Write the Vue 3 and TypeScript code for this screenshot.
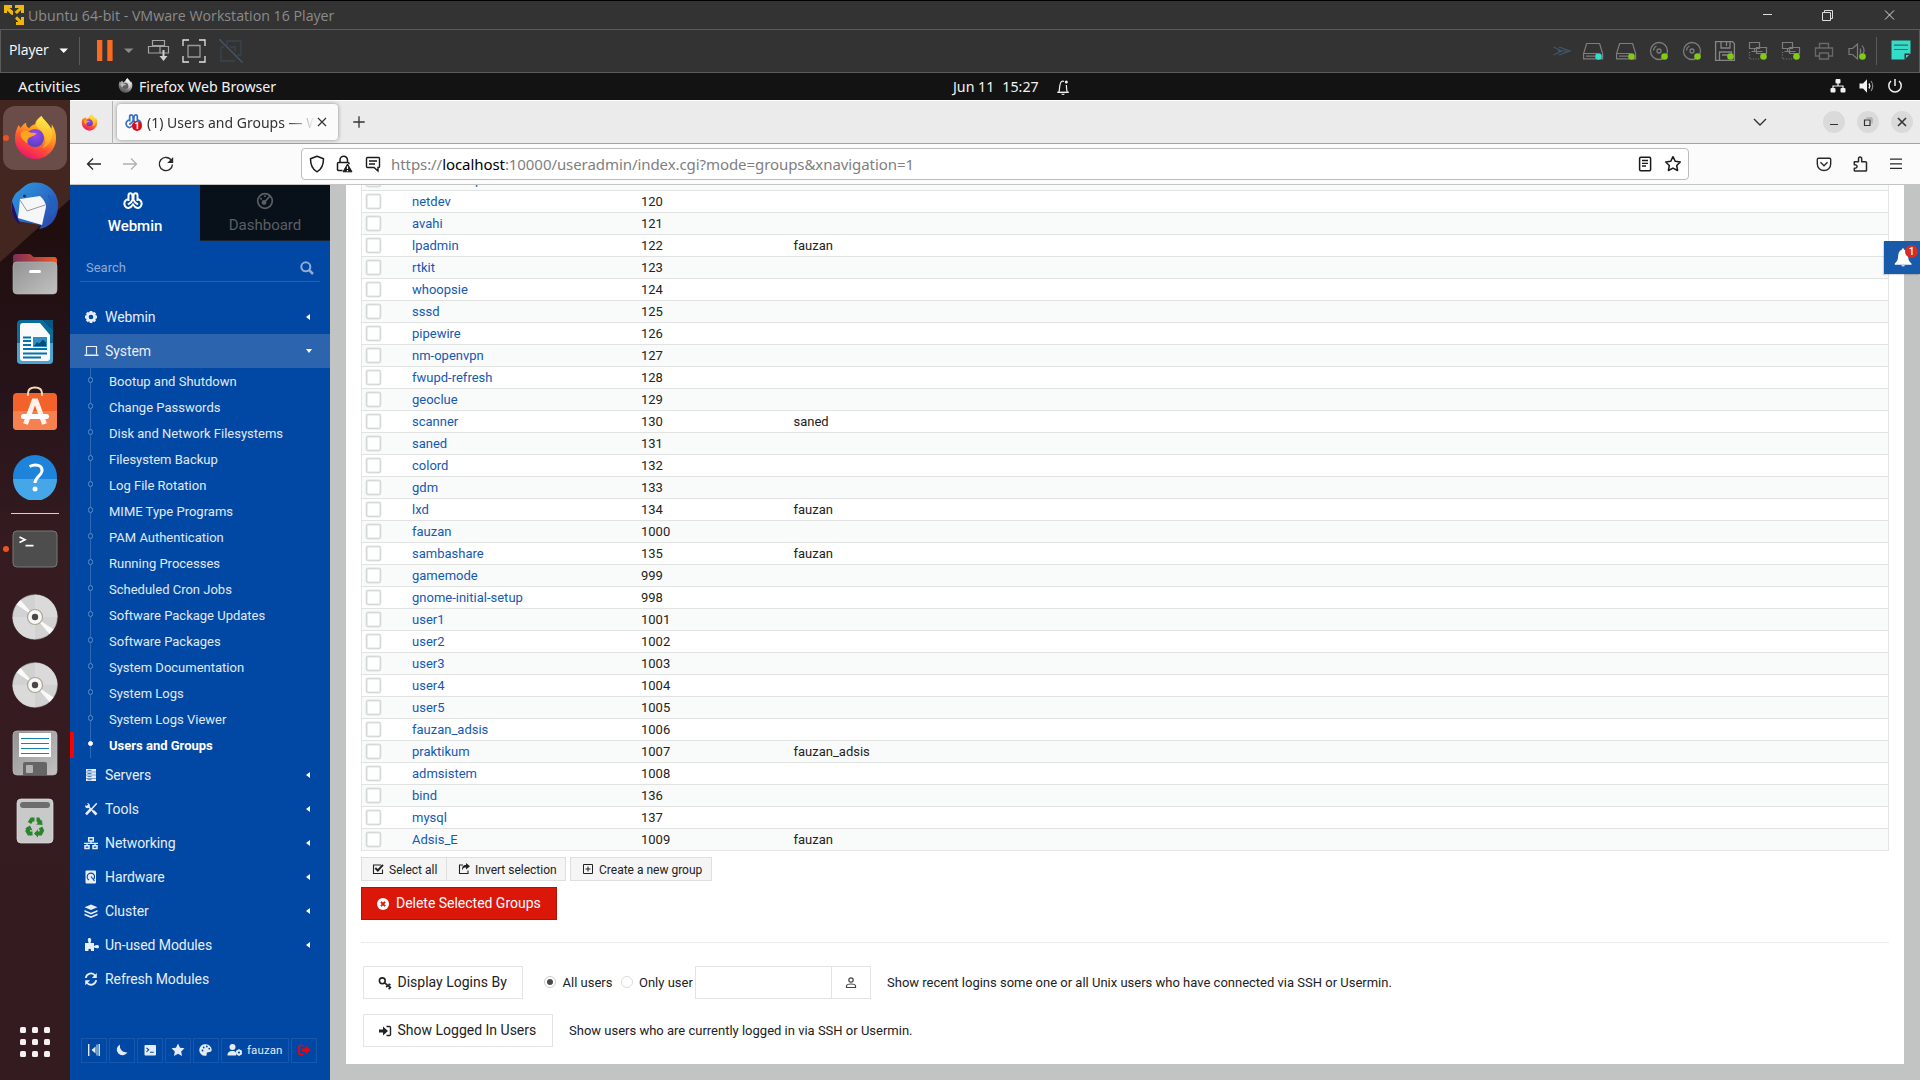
<script setup lang="ts">
interface Group { name: string; gid: number; members?: string }
interface NavItem { label: string; icon: string; arrow: boolean }

const groups: Group[] = [
  { name: 'avahi-autoipd', gid: 119 },
  { name: 'netdev', gid: 120 },
  { name: 'avahi', gid: 121 },
  { name: 'lpadmin', gid: 122, members: 'fauzan' },
  { name: 'rtkit', gid: 123 },
  { name: 'whoopsie', gid: 124 },
  { name: 'sssd', gid: 125 },
  { name: 'pipewire', gid: 126 },
  { name: 'nm-openvpn', gid: 127 },
  { name: 'fwupd-refresh', gid: 128 },
  { name: 'geoclue', gid: 129 },
  { name: 'scanner', gid: 130, members: 'saned' },
  { name: 'saned', gid: 131 },
  { name: 'colord', gid: 132 },
  { name: 'gdm', gid: 133 },
  { name: 'lxd', gid: 134, members: 'fauzan' },
  { name: 'fauzan', gid: 1000 },
  { name: 'sambashare', gid: 135, members: 'fauzan' },
  { name: 'gamemode', gid: 999 },
  { name: 'gnome-initial-setup', gid: 998 },
  { name: 'user1', gid: 1001 },
  { name: 'user2', gid: 1002 },
  { name: 'user3', gid: 1003 },
  { name: 'user4', gid: 1004 },
  { name: 'user5', gid: 1005 },
  { name: 'fauzan_adsis', gid: 1006 },
  { name: 'praktikum', gid: 1007, members: 'fauzan_adsis' },
  { name: 'admsistem', gid: 1008 },
  { name: 'bind', gid: 136 },
  { name: 'mysql', gid: 137 },
  { name: 'Adsis_E', gid: 1009, members: 'fauzan' },
]

const systemModules = [
  'Bootup and Shutdown', 'Change Passwords', 'Disk and Network Filesystems', 'Filesystem Backup',
  'Log File Rotation', 'MIME Type Programs', 'PAM Authentication', 'Running Processes',
  'Scheduled Cron Jobs', 'Software Package Updates', 'Software Packages', 'System Documentation',
  'System Logs', 'System Logs Viewer', 'Users and Groups',
]

const navItems: NavItem[] = [
  { label: 'Servers', icon: 'servers', arrow: true },
  { label: 'Tools', icon: 'tools', arrow: true },
  { label: 'Networking', icon: 'network', arrow: true },
  { label: 'Hardware', icon: 'hdd', arrow: true },
  { label: 'Cluster', icon: 'layers', arrow: true },
  { label: 'Un-used Modules', icon: 'puzzle', arrow: true },
  { label: 'Refresh Modules', icon: 'refresh', arrow: false },
]

const devices = ['chevrons', 'disk', 'disk2', 'cd', 'cd', 'floppy', 'net', 'net', 'printer', 'sound']

/* 24 x 24 glyphs, centred on 12,12 */
const dot = (fill: string) => `<circle cx="17.5" cy="17.5" r="3.3" fill="${fill}"/>`
const drive = '<path d="M5.6 4.5h13l3 10v5.300H2.600v-5.300zM2.600 14.500H16M5 17.200h9" fill="none" stroke="#7d7d7d" stroke-width="1.200"/>'
const icons: Record<string, string> = {
  chevrons: '<path d="M4.500 8l8 4-8 4M10 8l11 4-11 4M9 12h9" fill="none" stroke="#41596b" stroke-width="1.200"/>',
  disk: drive + dot('#35dcc8'),
  disk2: drive + dot('#84c81a'),
  cd: '<g fill="none" stroke="#7d7d7d" stroke-width="1.300"><circle cx="12" cy="12" r="8.500"/><circle cx="12" cy="12" r="2"/><path d="M6.500 11.500a5.500 5.500 0 0 1 3-4.500"/></g>' + dot('#84c81a'),
  floppy: '<path d="M2.600 2.600h16.800l2 2v16.800H2.600zM8 2.600v6.400h9V2.600M13.500 3v4M6.500 21.400v-8.400h12v5M9 16h7" fill="none" stroke="#858585" stroke-width="1.300"/>' + dot('#84c81a'),
  net: '<g fill="none" stroke="#7d7d7d" stroke-width="1.200"><path d="M3.500 3.500h10v6h-10zM10.500 8.500h10v6h-10zM8.500 9.500v3h-3M8.500 12.500h8"/><path d="M3.500 13v7h11" stroke-dasharray="1 1.600"/></g>' + dot('#84c81a'),
  printer: '<path d="M7.500 9V4.500h9V9M7.500 17h-4V9h17v8h-4M7.500 14h9v6h-9z" fill="none" stroke="#6a6a6a" stroke-width="1.300"/>',
  sound: '<path d="M4 9.500h3.500l5-4.500v15l-5-4.500H4zM15 9.500q1.500 2 0 5M17 6.500q3.500 4.500 1 8" fill="none" stroke="#7d7d7d" stroke-width="1.200"/>' + dot('#84c81a'),
  webmin: '<g fill="none" stroke="currentColor" stroke-width="2"><path d="M7.500 12V6.500c0-3 3.500-3 4 0V10M12.500 10V6.500c.5-3 4-3 4 0V12"/><path d="M7.500 10c-4 1-5 4-3.500 7 2 3 5 3 8-1.500 3 4.500 6 4.500 8 1.500 1.500-3 .5-6-3.500-7"/><path d="M7 15.500l3-2.200 2-3.300 2 3.300 3 2.200"/></g>',
  gauge: '<circle cx="12" cy="12" r="7.300" fill="none" stroke="currentColor" stroke-width="1.700"/><circle cx="11" cy="13.500" r="2.400" fill="currentColor"/><path d="M12 12.500L17.500 6.500M7.500 10.500l1-1.500M12 6.500v1.500" stroke="currentColor" stroke-width="1.800"/>',
  search: '<circle cx="10.800" cy="10.800" r="4.500" fill="none" stroke="currentColor" stroke-width="2.100"/><path d="M14 14l4 4" stroke="currentColor" stroke-width="2.500"/>',
  gear: '<circle cx="12" cy="12" r="3.700" fill="none" stroke="currentColor" stroke-width="2.800"/><path d="M12 6v2M12 16v2M6 12h2M16 12h2M7.800 7.800l1.300 1.300M14.900 14.900l1.300 1.300M7.800 16.200l1.300-1.300M14.900 9.100l1.300-1.300" stroke="currentColor" stroke-width="2.800"/>',
  laptop: '<path d="M7.500 15.500V7.500h10v8" fill="none" stroke="currentColor" stroke-width="1.200"/><path d="M5.500 15.500h14v1.500h-14z" fill="currentColor"/>',
  servers: '<g fill="currentColor"><path d="M7 6h10v2.700H7zM7 9.200h10v2.600H7zM7 12.300h10v2.600H7zM7 15.400h10V18H7z"/></g><path d="M8.500 7.400h4M8.500 10.500h4M8.500 13.600h4M8.500 16.700h4" stroke="#0048a3" stroke-width=".7"/>',
  tools: '<path d="M17.800 6.200l-7 7.800M8.500 8.500l8.500 9" stroke="currentColor" stroke-width="1.500"/><path d="M11.500 12.500l-4.500 4.800M14 13.800l3.500 3.700" stroke="currentColor" stroke-width="2.600"/><path d="M6 8.500c0 2 1.500 3 3.500 2.500l1.300-1.500C11.300 7.500 10 6 8 6l1.200 1.700-1.200 1z" fill="currentColor"/>',
  network: '<g fill="none" stroke="currentColor" stroke-width="1.500"><path d="M9.700 6.700h4.600v3.200H9.700zM6 14.700h4v2.800H6zM14 14.700h4v2.800h-4z"/><path d="M12 10v2M5 12.300h14M8 12v3M16 12v3" stroke-width="1.300"/></g>',
  hdd: '<rect x="6.500" y="5.500" width="10.500" height="13" rx="1" fill="currentColor"/><path d="M10 15a3.700 3.700 0 1 1 4-.2M12 11.500l3.500 4.500" fill="none" stroke="#0048a3" stroke-width="1.100"/>',
  layers: '<path d="M12 5.500l6.500 2.700L12 11 5.500 8.200z" fill="currentColor"/><path d="M5.500 11L12 13.800l6.500-2.800v1.800L12 15.500l-6.500-2.700zM5.500 14.500L12 17.200l6.500-2.700v1.800L12 19l-6.500-2.700z" fill="currentColor"/>',
  puzzle: '<path d="M6 10h3.800C8 6 9 5 10.500 5s2.500 1.500 1 5H15v3c3-1.500 5-1 5 .8s-2 2-5 .8V18h-3c.8-3-3.500-3-2.500 0H6z" fill="currentColor"/>',
  refresh: '<path d="M6.800 11a5.200 5.200 0 0 1 9.400-2.300M17.200 13.200a5.200 5.200 0 0 1-9.400 2.300" fill="none" stroke="currentColor" stroke-width="1.800"/><path d="M17.800 6v5h-5zM6.200 18.200v-5h5z" fill="currentColor"/>',
  collapse: '<path d="M6.700 6v12M17.200 6v12" stroke="currentColor" stroke-width="1.400"/><path d="M15 6.500v11" stroke="currentColor" stroke-width="1"/><path d="M13.500 8.500v7L9.500 12z" fill="currentColor"/>',
  moon: '<path d="M10 6.500a5.700 5.700 0 1 0 7.500 7.800A6.500 6.500 0 0 1 10 6.500z" fill="currentColor"/>',
  term: '<rect x="6.500" y="7" width="11.500" height="10.500" rx="1" fill="currentColor"/><path d="M8.500 9.800l2.200 2-2.200 2M12 14.300h3.700" fill="none" stroke="#0048a3" stroke-width="1.100"/>',
  starf: '<path d="M12 5.500l2 4.200 4.500.6-3.300 3.200.8 4.500-4-2.200L8 18l.8-4.500-3.300-3.200 4.500-.6z" fill="currentColor"/>',
  palette: '<path d="M12 6.300a5.800 5.800 0 1 0-.5 11.500c1.800 0 1-1.800 1.200-2.600.5-1.700 5-.2 5-3.400A5.700 5.700 0 0 0 12 6.300z" fill="currentColor"/><g fill="#0048a3"><circle cx="8.500" cy="12.500" r=".9"/><circle cx="9.700" cy="9.500" r=".9"/><circle cx="12.800" cy="8.500" r=".9"/><circle cx="15.300" cy="10.700" r=".9"/></g>',
  usercog: '<circle cx="9.500" cy="9" r="3" fill="currentColor"/><path d="M4.500 17.500c0-3.500 2-4.500 5-4.500 2 0 3 .5 3.500 1.500v3z" fill="currentColor"/><circle cx="16" cy="14.500" r="2" fill="none" stroke="currentColor" stroke-width="1.800"/><path d="M16 11.500v1M16 16.700v1M13.400 13l.9.500M17.800 15.500l.9.500M13.400 16l.9-.5M17.800 13.500l.9-.5" stroke="currentColor" stroke-width="1.500"/>',
  logout: '<path d="M11.500 7.500H8.200Q7 7.500 7 9v6.200q0 1.300 1.200 1.300h3.300" fill="none" stroke="currentColor" stroke-width="1.700"/><path d="M9.800 10.500h3.700V7.500l5 4.500-5 4.500v-3H9.800z" fill="currentColor"/>',
  check: '<path d="M16.500 12.500v4h-9v-8.500h7.500" fill="none" stroke="currentColor" stroke-width="1.100"/><path d="M9.300 11l2.500 2.500L17 7.800" fill="none" stroke="currentColor" stroke-width="1.900"/>',
  share: '<path d="M11 8H7.500v8.500h8.500v-3" fill="none" stroke="currentColor" stroke-width="1.100"/><path d="M10 13.500c0-4 1-5.500 4-5.500V6l4 3.300-4 3.300v-2c-2 0-3 .5-4 2.900z" fill="currentColor"/>',
  plusbox: '<path d="M7.500 7.500h9v9h-9zM12 9.500v5M9.500 12h5" fill="none" stroke="currentColor" stroke-width="1"/>',
  times: '<circle cx="12" cy="12" r="6" fill="#fff"/><path d="M9.900 9.900l4.200 4.200M14.100 9.900l-4.200 4.200" stroke="#db170a" stroke-width="1.900"/>',
  key: '<circle cx="9.300" cy="9.800" r="2.900" fill="none" stroke="currentColor" stroke-width="1.600"/><path d="M11.300 11.700l6.700 5.300M14.500 14.500l-1.300 1.700M17 16.500l-1.300 1.700M15.500 13l2 1" stroke="currentColor" stroke-width="1.600"/>',
  login: '<path d="M6 10.500h4V7.500l5 4.500-5 4.500v-3H6z" fill="currentColor"/><path d="M13.500 7.500h3q1 0 1 1v7q0 1-1 1h-3" fill="none" stroke="currentColor" stroke-width="1.400"/>',
  user: '<circle cx="12" cy="9" r="2.200" fill="none" stroke="currentColor" stroke-width="1.200"/><path d="M7.500 16.500v-1.500c0-1.500 2.500-2 4.500-2s4.500.5 4.500 2v1.500z" fill="none" stroke="currentColor" stroke-width="1.200"/>',
  back: '<path d="M19 12H5.500M11 6.500L5.500 12l5.500 5.500" fill="none" stroke="currentColor" stroke-width="1.300"/>',
  forward: '<path d="M5 12h13.500M13 6.500l5.500 5.500-5.500 5.500" fill="none" stroke="currentColor" stroke-width="1.300"/>',
  reload: '<path d="M17.500 8.500a6.600 6.600 0 1 0 1 4" fill="none" stroke="currentColor" stroke-width="1.400"/><path d="M19.200 5v6h-6z" fill="currentColor"/>',
  shield: '<path d="M12 4.300l6.500 2.500c0 6-1.500 10.500-6.500 13-5-2.500-6.500-7-6.500-13z" fill="none" stroke="currentColor" stroke-width="1.500" stroke-linejoin="round"/>',
  lock: '<path d="M8 10.500V8a3.500 3.500 0 0 1 7.500 0v2.500M10.500 18.500H6.200q-.7 0-.7-.7v-6.300q0-1 1-1h9.500q1 0 1 1v.7" fill="none" stroke="currentColor" stroke-width="1.500"/><path d="M15.500 12l4.500 7.800h-9z" fill="currentColor" stroke="currentColor" stroke-linejoin="round"/><path d="M15.500 14.300v2.700M15.500 18v1.200" stroke="#fff" stroke-width="1.200"/>',
  comment: '<path d="M6.500 5.500h11q1 0 1 1v8q0 1-1 1H17v3.500l-4-3.500H6.500q-1 0-1-1v-8q0-1 1-1zM8 9h8M8 12h6" fill="none" stroke="currentColor" stroke-width="1.400"/>',
  reader: '<rect x="6.600" y="5.200" width="11" height="13.600" rx="1.200" fill="none" stroke="currentColor" stroke-width="1.500"/><path d="M9 8.500h6M9 11.300h6M9 14h4" stroke="currentColor" stroke-width="1.300"/>',
  star: '<path d="M12 4.700l2.300 4.600 5 .7-3.600 3.500.9 5-4.600-2.400-4.600 2.400.9-5L4.700 10l5-.7z" fill="none" stroke="currentColor" stroke-width="1.500" stroke-linejoin="round"/>',
  pocket: '<path d="M6.500 6.300h11q1.200 0 1.200 1.200V12c0 4-3 6.500-6.700 6.500S5.300 16 5.300 12V7.500q0-1.200 1.200-1.200zM8.500 10.300l3.500 3.400 3.500-3.400" fill="none" stroke="currentColor" stroke-width="1.400"/>',
  ext: '<path d="M6.300 9.700h4.200V7c0-2.700 3.200-2.700 3.200 0v2.700h4q.8 0 .8.800v7.800q0 .8-.8.800H7q-.7 0-.7-.8v-2.100c3.700.3 3.700-3.700 0-3.400z" fill="none" stroke="currentColor" stroke-width="1.500" stroke-linejoin="round"/>',
  menu: '<path d="M6 7.200h12M6 11.800h12M6 16.400h12" stroke="currentColor" stroke-width="1.300"/>',
  plus: '<path d="M12 6.300v11.400M6.300 12h11.400" stroke="currentColor" stroke-width="1.300"/>',
  close: '<path d="M8 8l8 8M16 8l-8 8" stroke="currentColor" stroke-width="1.200"/>',
  chevdown: '<path d="M6 9l6 6 6-6" fill="none" stroke="currentColor" stroke-width="1.400"/>',
  bellfill: '<path d="M12 3.500c-1 0-1.200.6-1.200 1.200C7.500 6 7.300 9 7 12.500 6.700 16 5 17 3.800 18.500v1.200h16.700v-1.200C19 17 17.500 16 17.200 12.500 17 9 16.500 6 13.200 4.700c0-.6-.2-1.200-1.200-1.200z" fill="#fff"/><path d="M10.300 20.200h3.600c-.3 1.600-3.300 1.600-3.600 0z" fill="#fff"/>',
  belloutline: '<path d="M6.300 17.300h11.500" stroke="currentColor" stroke-width="1.400"/><path d="M8 17c.8-3 .2-9 2.600-10.500q1.200-.7 2.400 0M15.300 10c.4 3 .2 5 .9 7" fill="none" stroke="currentColor" stroke-width="1.200"/><circle cx="15.300" cy="7" r="1.500" fill="currentColor"/><path d="M10 18.700h4q-2 2.500-4 0z" fill="currentColor"/>',
  lan: '<g fill="currentColor"><rect x="9.500" y="5" width="5" height="4.500" rx="1"/><rect x="4.500" y="14" width="5" height="4.500" rx="1"/><rect x="14.500" y="14" width="5" height="4.500" rx="1"/></g><path d="M12 9v3M7 14.500V12h10v2.500" fill="none" stroke="currentColor" stroke-width="1.200"/>',
  volume: '<path d="M4.500 9.500H8l4-4.300v13.600l-4-4.300H4.500z" fill="currentColor"/><path d="M14 9.500q1.600 2.500 0 5" fill="none" stroke="currentColor" stroke-width="1.400"/><path d="M16 7q3.500 5 0 10" fill="none" stroke="#888" stroke-width="1.200"/>',
  power: '<path d="M8 7a6.200 6.200 0 1 0 8 0M12 5v7" fill="none" stroke="currentColor" stroke-width="1.500"/>',
}
const footer = ['collapse', 'moon', 'term', 'starf', 'palette']
</script>

<template>
  <div class="screen">
    <svg class="defs" width="0" height="0">
      <defs>
        <linearGradient id="fxBody" x1=".8" y1="0" x2=".3" y2="1">
          <stop offset="0" stop-color="#ffe33a" /><stop offset=".4" stop-color="#ff9a1f" />
          <stop offset=".7" stop-color="#ff4a3a" /><stop offset="1" stop-color="#e9146e" />
        </linearGradient>
        <radialGradient id="fxCore" cx=".5" cy=".3" r=".7">
          <stop offset="0" stop-color="#a046f0" /><stop offset="1" stop-color="#5342c0" />
        </radialGradient>
        <linearGradient id="fxFlame" x1=".6" y1="0" x2=".5" y2="1">
          <stop offset="0" stop-color="#fff04a" /><stop offset="1" stop-color="#ff9a1f" />
        </linearGradient>
        <linearGradient id="silver" x1="0" y1="0" x2="1" y2="1">
          <stop offset="0" stop-color="#929292" /><stop offset="1" stop-color="#c2c2c2" />
        </linearGradient>
        <linearGradient id="folderTab" x1="0" x2="1"><stop offset="0" stop-color="#7c2e57" /><stop offset="1" stop-color="#ee5a25" /></linearGradient>
        <linearGradient id="bird" x1="0" y1="0" x2="1" y2="1"><stop offset="0" stop-color="#2c9fe6" /><stop offset="1" stop-color="#2a3fa8" /></linearGradient>
        <symbol id="firefox" viewBox="0 0 44 46">
          <path fill="url(#fxBody)" d="M28 1C31 6 35 8 38 14 39 13 38.500 11 38.500 9.500 42 14 43 19 43 24A21 21 0 0 1 1 24C1 18 3 13 5 10 5.300 11.500 6 12.500 7 13 8.500 10.500 10 9 12.500 8 12 11 13.500 12.500 15.500 13.500 17 11.500 19 10 21.500 9.500 22 6 25 3 28 1z" />
          <circle cx="21.500" cy="23.500" r="9.300" fill="url(#fxCore)" />
          <path fill="url(#fxFlame)" d="M28 1C31 6 35 8 38 14 41 21 38 31 29 34 32.500 30 34 20 25.500 14 22 11.500 20.500 8 28 1z" />
          <path fill="#ffa41f" d="M7 18c4-2.500 7-2 9.500 0 2.500.3 4.500.3 6.500 1-1 2-3.500 2.500-6 3.500-3.500 1.500-3.500 4-3 6.500C10 27 6 23 7 18z" />
        </symbol>
        <symbol id="disc" viewBox="0 0 46 46">
          <circle cx="23" cy="23" r="22.300" fill="#d2d2d2" stroke="#b4b4b4" stroke-width=".6" />
          <path d="M23 23V.7A22.300 22.300 0 0 1 45.300 23zM23 23v22.300A22.300 22.300 0 0 1 .7 23z" fill="#dadada" />
          <path d="M23 23L4.500 10.500 8.500 6zM23 23l18.500 12.500L37.500 40z" fill="#fafafa" />
          <circle cx="23" cy="23" r="7.500" fill="#f7f7f5" stroke="#aca492" stroke-width="1.200" />
          <circle cx="23" cy="23" r="3.200" fill="#484848" />
        </symbol>
      </defs>
    </svg>

    <header class="titlebar">
      <svg class="vm" width="20" height="20" viewBox="0 0 20 20">
        <g fill="#efb60c">
          <path d="M0 0h8v3H5.500L9 6v4l-2-.500L3 5.500V8H0z" />
          <path d="M11 0h9v8h-3V5l-4 4-2.500-2L15 3h-4z" />
          <path d="M20 20h-8v-3h2.500L11 13.500l2-2.300 4 4V12h3z" />
        </g>
      </svg>
      <span class="title">Ubuntu 64-bit - VMware Workstation 16 Player</span>
      <div class="winbtns">
        <svg width="60" height="28" viewBox="0 0 60 28"><path d="M25 13.500h9" stroke="#ddd" /></svg>
        <svg width="60" height="28" viewBox="0 0 60 28"><path d="M23.500 11.500h8v8h-8zM25.500 11.500v-2h8v8h-2" fill="none" stroke="#ddd" /></svg>
        <svg width="60" height="28" viewBox="0 0 60 28"><path d="M25 9.500l9 9M34 9.500l-9 9" stroke="#ddd" /></svg>
      </div>
    </header>

    <div class="vmbar">
      <span class="player">Player</span>
      <svg class="caret" width="10" height="6" viewBox="0 0 10 6"><path d="M.5.500h8.500L4.700 5z" fill="#fff" /></svg>
      <i class="sep"></i>
      <svg class="pause" width="16" height="21" viewBox="0 0 16 21"><path d="M0 0h5.300v21H0zM10.300 0h5.300v21h-5.300z" fill="#fb6a1e" /></svg>
      <svg class="caret2" width="10" height="6" viewBox="0 0 10 6"><path d="M0 .500h9.500L4.700 5z" fill="#8a8a8a" /></svg>
      <svg class="t1" width="24" height="24" viewBox="0 0 24 24">
        <path d="M6.500 2.500h12v5h-12zM2.500 8.500h20v6.500h-20zM14 8.500V15" fill="none" stroke="#a2a2a2" stroke-width="1.200" />
        <path d="M17.500 12v7" stroke="#cfcfcf" stroke-width="2" /><path d="M13.500 18h8l-4 5z" fill="#cfcfcf" />
      </svg>
      <svg class="t2" width="24" height="24" viewBox="0 0 24 24">
        <path d="M1 7V1h6M17 1h6v6M1 17v6h6M17 23h6v-6" fill="none" stroke="#e4e4e4" stroke-width="1.300" /><path d="M6 6.500h12v11.500H6z" fill="none" stroke="#9a9a9a" stroke-width="1.300" />
      </svg>
      <svg class="t3" width="24" height="24" viewBox="0 0 24 24"><path d="M0 0l23.500 23.500" fill="none" stroke="#465563" stroke-width="1.400" /><path d="M8 6V2h14v14h-4M2 8v14h14M2 8h3M11 8h5v5" fill="none" stroke="#374551" stroke-width="1.300" /></svg>
      <div class="devices">
        <svg v-for="(d, i) in devices" :key="i" width="24" height="24" viewBox="0 0 24 24" v-html="icons[d]"></svg>
      </div>
      <i class="sep r"></i>
      <svg class="note" width="20" height="20" viewBox="0 0 20 20"><path d="M.5.500h19v13l-6 6H.5z" fill="#35dcc8" /><path d="M13.500 19.500v-6h6z" fill="#333" /><path d="M15 18v-3h3z" fill="#35dcc8" /><path d="M3 5.200h14M3 9.500h14" stroke="#286f68" stroke-width="1.200" /></svg>
    </div>

    <div class="gnome">
      <span class="act">Activities</span>
      <svg class="gfx" width="15" height="15"><use href="#firefox" /></svg>
      <span class="app">Firefox Web Browser</span>
      <span class="clock"><span>Jun 11</span><span>15:27</span></span>
      <svg class="gbell" width="24" height="24" viewBox="0 0 24 24" v-html="icons.belloutline"></svg>
      <div class="tray">
        <svg width="24" height="24" viewBox="0 0 24 24" v-html="icons.lan"></svg>
        <svg width="24" height="24" viewBox="0 0 24 24" v-html="icons.volume"></svg>
        <svg width="24" height="24" viewBox="0 0 24 24" v-html="icons.power"></svg>
      </div>
    </div>

    <div class="desktop">
      <aside class="dock">
        <div class="slot run"><div class="tile"><svg width="43" height="45"><use href="#firefox" /></svg></div></div>
        <div class="slot">
          <svg width="50" height="50" viewBox="0 0 50 50">
            <path d="M6 12C12 8 15 3 21 2c18-3 29 12 27 25-1 12-9 20-19 21 2-2 2-4 2-4L7 40C-1 32 0 19 6 12z" fill="url(#bird)" />
            <path d="M2 20c-2 10 1 19 9 24l-3-6z" fill="#231064" />
            <path d="M38 14c4 4 5 12 3 18M43 15c3 6 3 13-1 19" fill="none" stroke="#1f62bd" stroke-width="2" />
            <path d="M10 18l20-3c4 4 6 7 6 11l-4 18L8 37z" fill="#f5f6f8" /><path d="M10 19l7 11 18-6" fill="none" stroke="#999" stroke-width="1" />
            <circle cx="14.500" cy="15" r="1.500" fill="#152c55" />
          </svg>
        </div>
        <div class="slot">
          <svg width="46" height="42" viewBox="0 0 46 42"><path d="M1 4q0-3 3-3h13q2 0 3.500 2l1 1H42q3 0 3 3v14H1z" fill="url(#folderTab)" /><rect x="1" y="9" width="44" height="32" rx="4" fill="url(#silver)" stroke="#b9b9b9" stroke-width=".6" /><rect x="17" y="17" width="12" height="3" rx="1.500" fill="#fff" /></svg>
        </div>
        <div class="slot">
          <svg width="38" height="46" viewBox="0 0 38 46"><path d="M5 1h22l10 10v30q0 4-4 4H5q-4 0-4-4V5q0-4 4-4z" fill="#0a6c9d" /><path d="M1 24h36v17q0 4-4 4H5q-4 0-4-4z" fill="#4aa5d2" /><path d="M27 1h10v10z" fill="#0a5681" /><path d="M7 4h17l10 12v23q0 3-3 3H7q-3 0-3-3V7q0-3 3-3z" fill="#fafafa" /><path d="M7 18.500h8M7 22h8M7 26h8M7 30h24M7 34.500h24M7 38.500h18" stroke="#0372ae" stroke-width="1.800" /><rect x="17" y="18" width="14" height="10" fill="#2d8fc4" /><path d="M18 27l3-4 2 1.500 4-4 3 3V27z" fill="#064d7b" /></svg>
        </div>
        <div class="slot up2">
          <svg width="46" height="46" viewBox="0 0 46 46"><rect x="1" y="8" width="44" height="37" rx="4" fill="#f2622a" /><path d="M1 26h44v15q0 4-4 4H5q-4 0-4-4z" fill="#f58150" /><path d="M16 11V8.500q0-6 7-6t7 6V11" fill="none" stroke="#f7dcae" stroke-width="2" /><path d="M13.500 39L22 16h2l8.500 23" fill="none" stroke="#fff4ec" stroke-width="5" /><rect x="9" y="29" width="28" height="5" rx="2.500" fill="#fff" /></svg>
        </div>
        <div class="slot up1">
          <svg width="46" height="46" viewBox="0 0 46 46"><circle cx="23" cy="23" r="22" fill="#1e83da" /><path d="M1 25h44a22 22 0 0 1-44 0z" fill="#45a6e8" /><path d="M17.500 12.500c6-3 13-1.500 12.500 4.500-.5 5-6.500 5-7 12" fill="none" stroke="#fff" stroke-width="3" /><circle cx="23" cy="35" r="2.500" fill="#fff" /></svg>
        </div>
        <i class="dsep"></i>
        <div class="slot run">
          <svg width="46" height="38" viewBox="0 0 46 38"><rect x="1" y="1" width="44" height="36" rx="4" fill="#4d4d4d" stroke="#787878" /><path d="M7.500 7l5.500 2.800L7.500 12.500M13.500 15.700h8" fill="none" stroke="#fff" stroke-width="1.700" /></svg>
        </div>
        <div class="slot"><svg width="46" height="46"><use href="#disc" /></svg></div>
        <div class="slot"><svg width="46" height="46"><use href="#disc" /></svg></div>
        <div class="slot">
          <svg width="46" height="46" viewBox="0 0 46 46"><rect x="1" y="1" width="44" height="44" rx="4" fill="url(#silver)" stroke="#bbb" stroke-width=".7" /><rect x="7" y="3" width="32" height="24" fill="#fff" /><path d="M9 8.500h28M9 13.500h28M9 18.500h28M9 23.500h28" stroke="#1884ae" stroke-width="1.200" /><path d="M11 34q0-2 2-2h20q2 0 2 2v11H11z" fill="#656565" /><rect x="14" y="35" width="7" height="8" rx="1" fill="#b2b2b2" /></svg>
        </div>
        <div class="slot">
          <svg width="38" height="46" viewBox="0 0 38 46"><rect x="1" y="1" width="36" height="44" rx="4" fill="#c9c9c9" stroke="#e0e0e0" stroke-width=".7" /><rect x="4" y="4" width="30" height="6" rx="3" fill="#6d6d6d" />
            <g fill="none" stroke="#27852b" stroke-width="4"><path d="M13.500 25l2.300-3.500h2.700M20.500 21.500h1.500l1.800 3M24.500 29.500l1.500 3-1.500 3h-3M16.500 35.500h-3.500l-1.500-2.500 1.700-3.500" /></g>
            <path d="M20 26.500l6.500.5-.5-5zM22 31.500v8l-4-4zM9 30.500l5-3 2.500 5z" fill="#27852b" />
          </svg>
        </div>
        <div class="apps"><i v-for="n in 9" :key="n"></i></div>
      </aside>

      <div class="browser">
        <div class="tabs">
          <div class="pinned"><svg width="17" height="17"><use href="#firefox" /></svg></div>
          <div class="tab">
            <div class="fav">
              <svg width="17" height="17" viewBox="2 2 20 20" v-html="icons.webmin"></svg>
              <b>1</b>
            </div>
            <span class="tabtitle">(1) Users and Groups — W</span>
            <svg width="24" height="24" viewBox="0 0 24 24" v-html="icons.close"></svg>
          </div>
          <svg class="newtab" width="24" height="24" viewBox="0 0 24 24" v-html="icons.plus"></svg>
          <svg class="alltabs" width="24" height="24" viewBox="0 0 24 24" v-html="icons.chevdown"></svg>
          <div class="wc"><svg width="22" height="22" viewBox="0 0 22 22"><path d="M7 13.500h8" stroke="#333" /></svg></div>
          <div class="wc"><svg width="22" height="22" viewBox="0 0 22 22"><path d="M7.500 9h5.500v5.500H7.500z" fill="none" stroke="#333" stroke-width="1.200" /><path d="M9.500 7h5.500v5.500" fill="none" stroke="#999" /></svg></div>
          <div class="wc"><svg width="22" height="22" viewBox="0 0 22 22"><path d="M7 7l8 8M15 7l-8 8" stroke="#333" stroke-width="1.600" /></svg></div>
        </div>

        <div class="nav">
          <svg class="n1" width="24" height="24" viewBox="0 0 24 24" v-html="icons.back"></svg>
          <svg class="n2" width="24" height="24" viewBox="0 0 24 24" v-html="icons.forward"></svg>
          <svg class="n3" width="24" height="24" viewBox="0 0 24 24" v-html="icons.reload"></svg>
          <div class="urlbar">
            <svg width="24" height="24" viewBox="0 0 24 24" v-html="icons.shield"></svg>
            <svg width="24" height="24" viewBox="0 0 24 24" v-html="icons.lock"></svg>
            <svg width="24" height="24" viewBox="0 0 24 24" v-html="icons.comment"></svg>
            <span class="url">https://<b>localhost</b>:10000/useradmin/index.cgi?mode=groups&amp;xnavigation=1</span>
            <svg width="24" height="24" viewBox="0 0 24 24" v-html="icons.reader"></svg>
            <svg width="24" height="24" viewBox="0 0 24 24" v-html="icons.star"></svg>
          </div>
          <div class="navright">
            <svg width="24" height="24" viewBox="0 0 24 24" v-html="icons.pocket"></svg>
            <svg width="24" height="24" viewBox="0 0 24 24" v-html="icons.ext"></svg>
            <svg width="24" height="24" viewBox="0 0 24 24" v-html="icons.menu"></svg>
          </div>
        </div>

        <div class="page">
          <nav class="sidebar">
            <div class="modes">
              <div class="mode on"><svg width="24" height="24" viewBox="0 0 24 24" v-html="icons.webmin"></svg><span>Webmin</span></div>
              <div class="mode"><svg width="24" height="24" viewBox="0 0 24 24" v-html="icons.gauge"></svg><span>Dashboard</span></div>
            </div>
            <div class="search"><span>Search</span><svg width="24" height="24" viewBox="0 0 24 24" v-html="icons.search"></svg></div>
            <div class="item"><svg width="24" height="24" viewBox="0 0 24 24" v-html="icons.gear"></svg><span>Webmin</span><i class="left"></i></div>
            <div class="item open"><svg width="24" height="24" viewBox="0 0 24 24" v-html="icons.laptop"></svg><span>System</span><i class="down"></i></div>
            <ul class="sub">
              <li v-for="m in systemModules" :key="m" :class="{ active: m === 'Users and Groups' }"><i></i>{{ m }}</li>
            </ul>
            <div v-for="n in navItems" :key="n.label" class="item">
              <svg width="24" height="24" viewBox="0 0 24 24" v-html="icons[n.icon]"></svg><span>{{ n.label }}</span><i v-if="n.arrow" class="left"></i>
            </div>
            <div class="foot">
              <a v-for="f in footer" :key="f"><svg width="24" height="24" viewBox="0 0 24 24" v-html="icons[f]"></svg></a>
              <a class="me"><svg width="24" height="24" viewBox="0 0 24 24" v-html="icons.usercog"></svg><span>fauzan</span></a>
              <a class="out"><svg width="24" height="24" viewBox="0 0 24 24" v-html="icons.logout"></svg></a>
            </div>
          </nav>

          <main class="content">
            <section class="panel">
              <div class="table">
                <div v-for="g in groups" :key="g.name" class="row">
                  <i class="cb"></i><span class="name">{{ g.name }}</span><span class="gid">{{ g.gid }}</span><span>{{ g.members }}</span>
                </div>
              </div>
              <div class="links">
                <a><svg width="24" height="24" viewBox="0 0 24 24" v-html="icons.check"></svg>Select all</a>
                <a class="inv"><svg width="24" height="24" viewBox="0 0 24 24" v-html="icons.share"></svg>Invert selection</a>
                <a class="create"><svg width="24" height="24" viewBox="0 0 24 24" v-html="icons.plusbox"></svg>Create a new group</a>
              </div>
              <div class="delete"><svg width="24" height="24" viewBox="0 0 24 24" v-html="icons.times"></svg>Delete Selected Groups</div>
              <hr>
              <div class="form">
                <div class="btn b1"><svg width="24" height="24" viewBox="0 0 24 24" v-html="icons.key"></svg>Display Logins By</div>
                <i class="radio sel"></i><span class="all">All users</span>
                <i class="radio"></i><span class="only">Only user</span>
                <div class="input"></div>
                <div class="pick"><svg width="24" height="24" viewBox="0 0 24 24" v-html="icons.user"></svg></div>
                <span class="desc">Show recent logins some one or all Unix users who have connected via SSH or Usermin.</span>
              </div>
              <div class="form second">
                <div class="btn b2"><svg width="24" height="24" viewBox="0 0 24 24" v-html="icons.login"></svg>Show Logged In Users</div>
                <span class="desc2">Show users who are currently logged in via SSH or Usermin.</span>
              </div>
            </section>
            <div class="notify"><svg width="24" height="24" viewBox="0 0 24 24" v-html="icons.bellfill"></svg><b>1</b></div>
          </main>
        </div>
      </div>
    </div>
  </div>
</template>

<style>
body { margin: 0; overflow: hidden; }
</style>

<style scoped>
* { box-sizing: border-box; }
svg { flex: none; display: block; }
i { font-style: normal; flex: none; }
span { white-space: nowrap; }
.screen { width: 1920px; height: 1080px; display: flex; flex-direction: column; overflow: hidden; background: #131313; font-family: Roboto, sans-serif; }
.defs { position: absolute; }

.titlebar { height: 30px; flex: none; display: flex; align-items: center; background: #333; border-top: 1px solid #000; border-bottom: 1px solid #5b5b5b; padding-left: 4px; font-family: "Open Sans", sans-serif; }
.title { margin-left: 4px; font-size: 14.200px; color: #8b8b8b; }
.winbtns { margin-left: auto; display: flex; gap: 1px; margin-right: 0; }

.vmbar { height: 43px; flex: none; display: flex; align-items: center; background: #333; border: 1px solid #5b5b5b; border-top: 0; padding-left: 8px; font-family: "Open Sans", sans-serif; }
.player { font-size: 14px; color: #fff; width: 50px; letter-spacing: -.1px; line-height: 20px; margin-top: -2px; }
.caret { width: 10px; }
.sep { width: 1px; height: 28px; background: #5b5b5b; margin-left: 10px; margin-top: -1px; }
.pause { margin-left: 17px; margin-top: -1px; }
.caret2 { margin-left: 11px; }
.t1 { margin-left: 12px; margin-top: -2px; }
.t2 { margin-left: 12px; margin-top: -1px; }
.t3 { margin-left: 13px; margin-top: -1px; }
.devices { margin-left: auto; display: flex; gap: 9px; margin-right: 7px; }
.devices svg:first-child { margin-right: -1px; }
.sep.r { margin-left: 0; }
.note { margin: -2px 8px 0 14px; }

.gnome { height: 27px; flex: none; display: flex; align-items: center; color: #f2f2f2; padding-left: 18px; font: 15px "Noto Sans", sans-serif; line-height: 27px; }
.act { width: 100px; }
.gfx { filter: grayscale(1) brightness(1.1); margin-top: -2px; }
.app { margin-left: 6px; font-size: 14.200px; width: 814px; }
.clock { display: flex; gap: 8px; font-size: 14.200px; width: 98px; }
.tray { margin-left: auto; display: flex; gap: 4.500px; padding-right: 13px; margin-top: -2px; }

.desktop { flex: 1; min-height: 0; display: flex; }
.dock { width: 70px; flex: none; display: flex; flex-direction: column; padding: 4px 0 23px; background: linear-gradient(138deg, #43261f 0, #43261f 120px, transparent 121px), linear-gradient(180deg, #200e0f 130px, #27141a 300px, #361c20 460px, #331b1f 100%); }
.slot { height: 68px; flex: none; display: flex; align-items: center; justify-content: center; position: relative; }
.slot.up2 { padding-bottom: 4px; }
.slot.up1 { padding-bottom: 2px; }
.slot.run::before { content: ''; position: absolute; left: 3px; top: 31px; width: 6px; height: 6px; border-radius: 50%; background: #e95420; }
.tile { width: 64px; height: 64px; border-radius: 12px; background: #6a4c48; display: flex; align-items: center; justify-content: center; padding-bottom: 1px; }
.dsep { height: 1px; margin: 1px 11px; background: #d8d2d2; }
.apps { margin: auto 20px 0; display: grid; grid-template-columns: repeat(3, 6px); gap: 6px; }
.apps i { width: 6px; height: 6px; border-radius: 1.500px; background: #f4f1f1; }

.browser { flex: 1; min-width: 0; display: flex; flex-direction: column; }
.tabs { height: 44px; flex: none; display: flex; align-items: center; background: #ebebeb; border-top: 1px solid #fff; border-bottom: 1px solid #a2a2a2; color: #333; }
.pinned { width: 43px; height: 43px; border-right: 1px solid #b5b5b5; display: flex; align-items: center; padding-left: 11px; }
.tab { width: 221px; height: 36px; margin-left: 4px; border-radius: 4px; background: #fbfbfb; box-shadow: 0 0 4px rgba(0, 0, 0, .4); display: flex; align-items: center; padding-left: 8px; }
.fav { width: 20px; height: 18px; color: #3a70c4; position: relative; }
.fav b { position: absolute; right: 3px; bottom: 0; width: 10px; height: 10px; border-radius: 50%; background: #dc0e14; color: #fff; font: bold 9px/10px Roboto, sans-serif; text-align: center; }
.tabtitle { margin-left: 2px; width: 173px; font: 14px "Noto Sans", sans-serif; color: #333; -webkit-mask-image: linear-gradient(90deg, #000 140px, transparent 168px); mask-image: linear-gradient(90deg, #000 140px, transparent 168px); }
.tab svg:last-child { margin-left: -10px; }
.newtab { margin-left: 9px; }
.alltabs { margin-left: auto; margin-right: 51px; }
.wc { width: 22px; height: 22px; border-radius: 50%; background: #dadada; margin-right: 12px; flex: none; }
.wc:last-child { margin-right: 7px; }

.nav { height: 41px; flex: none; display: flex; align-items: center; background: #fbfbfb; border-bottom: 1px solid #c4c4c4; color: #2a2a2a; padding-left: 12px; }
.n2 { margin-left: 12px; color: #b0b0b0; }
.n3 { margin-left: 12px; }
.urlbar { width: 1388px; height: 32px; margin-left: 123px; border: 1px solid #bcbcbc; border-radius: 4px; background: #fff; display: flex; align-items: center; gap: 4px; padding: 0 3px; color: #1a1a1a; }
.urlbar svg:first-child { margin-right: -1px; }
.urlbar svg:nth-child(3) { margin-left: 1px; }
.url { flex: 1; margin-left: 2px; font: 15px/30px "Noto Sans", sans-serif; letter-spacing: -.07px; color: #808080; }
.url b { font-weight: 400; color: #000; }
.navright { margin-left: auto; display: flex; gap: 12px; padding-right: 12px; }

.page { flex: 1; min-height: 0; display: flex; background: #c2c4c3; }
.sidebar { width: 260px; flex: none; background: #0048a3; color: #e6ecf7; font-size: 14px; display: flex; flex-direction: column; }
.modes { height: 56px; flex: none; display: flex; }
.mode { width: 130px; display: flex; flex-direction: column; align-items: center; background: #08101a; color: #5b5e62; font-size: 15px; padding-top: 4px; border-bottom: 1px solid #1b2530; }
.mode span { line-height: 18px; margin-top: 3px; }
.mode.on { background: none; color: #fff; font-weight: 500; border: 0; padding-right: 4px; }
.mode.on span { margin-top: 4px; padding-left: 4px; }
.search { height: 41px; flex: none; margin: 0 10px 18px; display: flex; align-items: center; justify-content: space-between; padding: 13px 1px 0 6px; border-bottom: 1px solid #255fb1; font-size: 13px; color: #8eaad6; }
.item { height: 34px; flex: none; display: flex; align-items: center; padding-left: 9px; color: #e8edf8; }
.item span { margin-left: 2px; letter-spacing: -.08px; }
.item i { margin-left: auto; margin-right: 20px; width: 0; height: 0; border: 3.500px solid transparent; border-right-color: #fff; border-left: 0; border-right-width: 4px; }
.item i.down { border: 3.500px solid transparent; border-top: 4px solid #fff; border-bottom: 0; margin-right: 18px; }
.item.open { background: #2d64ae; }
.sub { list-style: none; margin: 0; padding: 0; background: linear-gradient(#2f6ab8, #2f6ab8) 20px 0 / 1px 100% no-repeat; }
.sub li { height: 26px; display: flex; align-items: center; padding-left: 18px; font-size: 13px; color: #e2e9f5; line-height: 26px; padding-top: 1px; }
.sub i { width: 5px; height: 6px; border-radius: 3px; border: 1px solid #5d8dca; background: #0048a3; margin: -4px 16px 0 0; }
.sub li.active { font-weight: 700; color: #fff; border-left: 4px solid #f00; padding-left: 14px; }
.sub li.active i { background: #fff; border-color: #fff; height: 5px; }
.foot { margin-top: auto; margin-bottom: 17px; margin-left: 11px; display: flex; gap: 2px; }
.foot a { width: 26px; height: 25px; border: 1px solid #1757ad; display: flex; align-items: center; justify-content: center; padding-bottom: 1px; }
.foot a.me { width: 68px; justify-content: flex-start; padding-left: 1px; font-size: 11.500px; letter-spacing: .1px; }
.foot a.me span { margin-top: -1px; }
.foot a.out { color: #f5000a; }

.content { flex: 1; min-width: 0; display: flex; padding: 0 16px 16px 16px; position: relative; }
.panel { flex: 1; min-width: 0; background: #fff; padding: 0 16px 0 15px; overflow: hidden; display: flex; flex-direction: column; color: #222; }
.table { margin-top: -16px; border: 1px solid #e4e6e6; border-top: 0; width: 1528px; flex: none; }
.row { height: 22px; display: flex; align-items: center; border-bottom: 1px solid #e1e3e3; font-size: 13px; color: #222; background: #fff; }
.row:last-child { border-bottom: 0; height: 21px; }
.row:nth-child(odd) { background: #f9fafa; }
.cb { width: 15px; height: 15px; margin-left: 4px; border: 1px solid #d6d9d9; border-radius: 2px; box-shadow: inset 0 0 0 .6px #dfe1e1, 0 0 0 .4px #dfe1e1; background: #fdfefe; }
.name { margin-left: 31px; width: 229px; color: #1459b3; }
.gid { width: 152.500px; }
.links { margin-top: 6px; display: flex; font-size: 12px; height: 24px; flex: none; }
.links a { display: flex; align-items: center; background: #f5f5f5; border: 1px solid #dfdfdf; width: 86px; padding: 1px 0 0 4px; white-space: pre; }
.links svg { margin-right: -1px; margin-top: -2px; }
.links a.inv { width: 119px; border-left: 0; padding-left: 5px; }
.links a.create { margin-left: 4px; width: 142px; padding-left: 5px; }
.delete { margin-top: 6px; width: 196px; height: 33px; flex: none; background: #db170a; border: 1px solid #b01408; color: #fff; font-size: 14px; display: flex; align-items: center; padding: 0 0 1px 9px; letter-spacing: -.02px; }
.delete svg { margin: 2px 1px 0 0; }
hr { width: 1528px; height: 1px; flex: none; border: 0; background: #ebebeb; margin: 22px 0 23px; }
.form { display: flex; align-items: center; height: 33px; flex: none; margin-left: 2px; font-size: 13px; }
.form.second { margin-top: 15px; }
.btn { height: 33px; border: 1px solid #e3e3e3; display: flex; align-items: center; font-size: 14px; padding: 0 0 1px 9px; flex: none; white-space: nowrap; }
.btn svg { margin-right: .5px; margin-top: 2px; }
.b1 { width: 160px; }
.b2 { width: 190px; }
.radio { width: 12px; height: 12px; border-radius: 50%; border: 1px solid #dcdcdc; display: flex; align-items: center; justify-content: center; margin-left: 10px; margin-top: -1px; }
.radio.sel { margin-left: 21px; border-color: #cfcfcf; }
.radio.sel::after { content: ''; width: 6px; height: 6px; border-radius: 50%; background: #4a4a4a; }
.all { margin-left: 6.500px; width: 48px; }
.only { margin-left: 6.500px; width: 56px; }
.input { width: 136px; height: 33px; border: 1px solid #e3e3e3; border-right: 0; }
.pick { width: 40px; height: 33px; border: 1px solid #e3e3e3; display: flex; align-items: center; justify-content: center; color: #444; }
.desc { margin-left: 16px; }
.desc2 { margin-left: 16px; }
.notify { position: absolute; right: 0; top: 56px; width: 36px; height: 33px; background: #1a5aaa; box-shadow: -1px 1px 1px rgba(0, 0, 0, .15); padding: 4px 0 0 7px; }
.notify b { position: absolute; right: 2px; top: 4px; width: 13px; height: 13px; border-radius: 50%; background: #d62b28; color: #fff; font: 500 10px/13px Roboto, sans-serif; text-align: center; }
</style>
